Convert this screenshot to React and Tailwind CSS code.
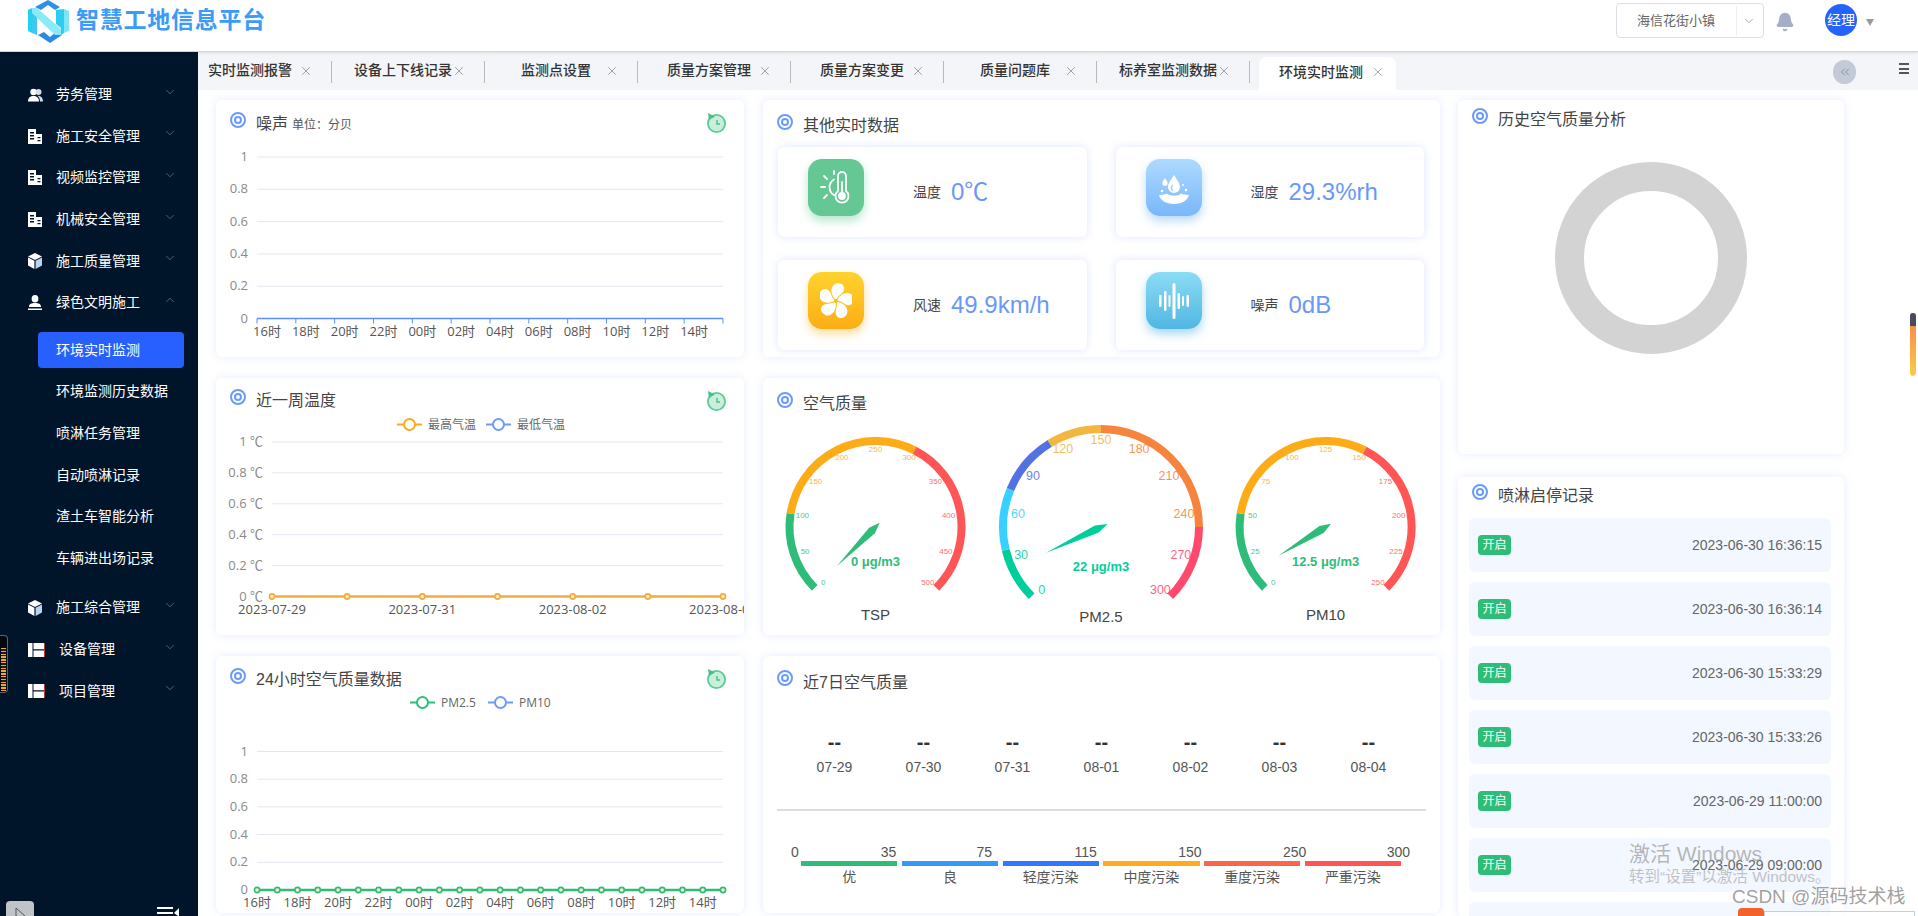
import { ChevronDown, ChevronUp, ChevronsLeft, X, Bell } from "lucide-react";

const tabs = [
  { name: "实时监测报警", first: true },
  { name: "设备上下线记录" },
  { name: "监测点设置" },
  { name: "质量方案管理" },
  { name: "质量方案变更" },
  { name: "质量问题库" },
  { name: "标养室监测数据" },
];

const hours = ["16时", "18时", "20时", "22时", "00时", "02时", "04时", "06时", "08时", "10时", "12时", "14时"];

function TargetIcon({ className = "" }) {
  return (
    <svg width="16" height="16" viewBox="0 0 16 16" className={`shrink-0 ${className}`}>
      <circle cx="8" cy="8" r="7" fill="none" stroke="#6a9bfb" strokeWidth="2" />
      <circle cx="8" cy="8" r="3" fill="none" stroke="#6a9bfb" strokeWidth="2" />
    </svg>
  );
}

function RefreshIcon() {
  return (
    <svg width="21" height="21" viewBox="0 0 21 21" className="absolute right-[17px] top-[12px]">
      <circle cx="10.5" cy="11.5" r="8.6" fill="#c9eedb" stroke="#5fcb95" strokeWidth="1.8" />
      <path d="M2 1 L3 8 L9 4.500 Z" fill="#4cbf87" />
      <path d="M11 8 V12 H14" fill="none" stroke="#4cbf87" strokeWidth="1.4" />
    </svg>
  );
}

function Card({ className = "", children }) {
  return (
    <div className={`relative rounded-md bg-white overflow-hidden shadow-[0_0_10px_rgba(90,130,250,0.16)] ${className}`}>
      {children}
    </div>
  );
}

function CardTitle({ text, iconTop, titleTop, sub }) {
  return (
    <div className="flex items-start pl-[14px]">
      <TargetIcon className={iconTop} />
      <div className={`ml-[10px] text-[16px] leading-6 text-[#444] whitespace-nowrap ${titleTop}`}>
        {text}
        {sub && <span className="ml-1 text-[12px] text-[#555]">{sub}</span>}
      </div>
    </div>
  );
}

// flat line charts, all series are at zero
function LineChart({ top, bottom, left, yLabels, xLabels, band, color, points, dot, legend, labelY, axis }) {
  const right = 507;
  const rows = yLabels.length - 1;
  const xs = Array.from({ length: points }, (_, i) => left + (i * (right - left)) / (points - 1));
  return (
    <svg width="528" height="221" className="block font-['Open_Sans','Noto_Sans_CJK_SC',sans-serif]">
      {legend?.map((l) => (
        <g key={l.text}>
          <line x1={l.x} x2={l.x + 25} y1="10.5" y2="10.5" stroke={l.color} strokeWidth="2" />
          <circle cx={l.x + 12.5} cy="10.5" r="5.5" fill="#fff" stroke={l.color} strokeWidth="2" />
          <text x={l.x + 31} y="14.5" fontSize="12" fill="#666">{l.text}</text>
        </g>
      ))}
      {yLabels.map((t, i) => {
        const y = bottom - (i * (bottom - top)) / rows;
        return (
          <g key={t}>
            {i > 0 && <line x1={left} x2={right} y1={y} y2={y} stroke="#e3e7f1" />}
            <text x={left - 9} y={y + 4} textAnchor="end" fontSize="13" fill="#8a8a8a">{t}</text>
          </g>
        );
      })}
      {axis && (
        <g stroke="#5b8ff9">
          <line x1={left} x2={right} y1={bottom} y2={bottom} strokeWidth="1.5" />
          {Array.from({ length: 13 }, (_, i) => {
            const x = left + (i * (right - left)) / 12;
            return <line key={i} x1={x} x2={x} y1={bottom} y2={bottom + 5} />;
          })}
        </g>
      )}
      {points > 0 && !axis && (
        <>
          <line x1={left} x2={right} y1={bottom} y2={bottom} stroke={color} strokeWidth="2.5" />
          {xs.map((x) => (
            <circle key={x} cx={x} cy={bottom} r={dot} fill="#ffe9c4" stroke={color} strokeWidth="1.6" />
          ))}
        </>
      )}
      {xLabels.map((t, i) => (
        <text key={t} x={left + (axis ? 10 : 0) + i * band} y={labelY} textAnchor="middle" fontSize="13" fill="#555">
          {t}
        </text>
      ))}
    </svg>
  );
}

const polar = (cx, cy, rx, ry, deg) => {
  const a = (deg * Math.PI) / 180;
  return [cx + rx * Math.cos(a), cy - ry * Math.sin(a)];
};

function Gauge({ cx, cy, R, max, step, segs, tip, end, value, valueY, label, labelY, tickRx, tickRy, tickSize, color }) {
  const ang = (f) => 225 - 270 * f;
  const r = R - 4;
  let from = 0;
  const ticks = [];
  for (let v = 0; v <= max; v += step) ticks.push(v);
  const [tx, ty] = tip;
  const [ex, ey] = end;
  const wx = tx + (ex - tx) * 0.82;
  const wy = ty + (ey - ty) * 0.82;
  const len = Math.hypot(ex - tx, ey - ty);
  const nx = (-(ey - ty) / len) * 4;
  const ny = ((ex - tx) / len) * 4;
  return (
    <g>
      {segs.map(([to, c]) => {
        const [x1, y1] = polar(cx, cy, r, r, ang(from / max));
        const [x2, y2] = polar(cx, cy, r, r, ang(to / max));
        const big = ((to - from) / max) * 270 > 180 ? 1 : 0;
        const d = `M${x1} ${y1} A${r} ${r} 0 ${big} 1 ${x2} ${y2}`;
        from = to;
        return <path key={to} d={d} fill="none" stroke={c} strokeWidth="8" />;
      })}
      {ticks.map((v) => {
        const [x, y] = polar(cx, cy, tickRx, tickRy, ang(v / max));
        const seg = segs.find(([to]) => v <= to);
        return (
          <text key={v} x={x} y={y + tickSize * 0.36} textAnchor="middle" fontSize={tickSize} fill={seg[1]} opacity="0.85">
            {v}
          </text>
        );
      })}
      <polygon points={`${tx},${ty} ${wx + nx},${wy + ny} ${ex},${ey} ${wx - nx},${wy - ny}`} fill={color} />
      <text x={cx} y={valueY} textAnchor="middle" fontSize="13" fontWeight="700" fill={color}>{value}</text>
      <text x={cx} y={labelY} textAnchor="middle" fontSize="15" fill="#444">{label}</text>
    </g>
  );
}

function SideIcon({ type }) {
  if (type === "people")
    return (
      <svg width="15" height="14" viewBox="0 0 15 14" fill="#fff">
        <circle cx="5.5" cy="4" r="3.2" />
        <circle cx="10.5" cy="4" r="3" fill="#d5dcec" />
        <path d="M0 13.5c0-4 2.5-5.5 5.5-5.5S11 9.500 11 13.500z" />
        <path d="M9.500 7.800c3 0 5.500 1.700 5.500 5.700h-3c0-2.500-1-4.500-2.500-5.700z" fill="#d5dcec" />
      </svg>
    );
  if (type === "building")
    return (
      <svg width="14" height="15" viewBox="0 0 14 15" fill="#fff">
        <path d="M0 15V0h8v5h6v10z" />
        <path d="M2 3h4v1.500H2zM2 6h4v1.500H2zM2 9h4v1.500H2zM9.500 8h3v1.300h-3zM9.500 11h3v1.300h-3z" fill="#00142a" />
      </svg>
    );
  if (type === "cube")
    return (
      <svg width="14" height="16" viewBox="0 0 14 16">
        <path d="M7 0l7 3.500L7 7 0 3.500z" fill="#fff" />
        <path d="M0 4.500l6.400 3.300V16L0 12.500z" fill="#fff" />
        <path d="M7.600 7.800L14 4.500v8L7.600 16z" fill="#b8d3f0" />
      </svg>
    );
  if (type === "user")
    return (
      <svg width="14" height="15" viewBox="0 0 14 15" fill="#fff">
        <ellipse cx="7" cy="3.800" rx="3.400" ry="3.800" />
        <path d="M1 11.500c0-2.500 2.500-3.500 6-3.500s6 1 6 3.500v.5H1zM0 13.500h14V15H0z" />
      </svg>
    );
  return (
    <svg width="17" height="14" viewBox="0 0 17 14">
      <path d="M0 0h4.500v14H0z" fill="#fff" />
      <path d="M5.500 0H16v6.200H5.500zM5.500 7.500H16V14H5.500z" fill="#fff" />
      <path d="M16 0h1v14h-1z" fill="#b03a3a" />
    </svg>
  );
}

function NavItem({ icon, label, open, extra = "", textClass = "ml-[11px]" }) {
  return (
    <div className={`flex items-center h-[41.6px] pl-[28px] pr-[21px] text-white text-[14px] ${extra}`}>
      <span className="w-[17px] flex justify-start"><SideIcon type={icon} /></span>
      <span className={`flex-1 whitespace-nowrap ${textClass}`}>{label}</span>
      {open ? (
        <ChevronUp size={14} strokeWidth={1} className="text-[#8a97a8] -mt-[6px]" />
      ) : (
        <ChevronDown size={14} strokeWidth={1} className="text-[#8a97a8] -mt-[6px]" />
      )}
    </div>
  );
}

function SubItem({ label, active }) {
  return (
    <div className="flex items-center h-[41.6px] pl-[38px] pr-[14px]">
      <div className={`w-full h-9 flex items-center pl-[18px] rounded text-[14px] text-white whitespace-nowrap ${active ? "bg-[#2860ff]" : ""}`}>
        {label}
      </div>
    </div>
  );
}

function Sidebar() {
  return (
    <aside className="w-[198px] shrink-0 bg-[#00142a] pt-[22px]">
      <NavItem icon="people" label="劳务管理" />
      <NavItem icon="building" label="施工安全管理" />
      <NavItem icon="building" label="视频监控管理" />
      <NavItem icon="building" label="机械安全管理" />
      <NavItem icon="cube" label="施工质量管理" />
      <NavItem icon="user" label="绿色文明施工" open />
      <div className="mt-[6px]">
        <SubItem label="环境实时监测" active />
        <SubItem label="环境监测历史数据" />
        <SubItem label="喷淋任务管理" />
        <SubItem label="自动喷淋记录" />
        <SubItem label="渣土车智能分析" />
        <SubItem label="车辆进出场记录" />
      </div>
      <NavItem icon="cube" label="施工综合管理" extra="mt-[8px]" />
      <NavItem icon="panel" label="设备管理" textClass="ml-[14px]" />
      <NavItem icon="panel" label="项目管理" textClass="ml-[14px]" />
    </aside>
  );
}

function Tab({ name, first }) {
  return (
    <div className={`flex items-center h-[38px] text-[14px] font-medium text-[#333] ${first ? "w-[134px]" : "w-[153px]"}`}>
      <span className={`w-[98px] text-center whitespace-nowrap -mt-[1px] ${first ? "ml-[3px]" : "ml-[22px]"}`}>{name}</span>
      <X size={14} strokeWidth={1} className="ml-0 text-[#666] shrink-0" />
      <span className="ml-auto w-px h-[22px] bg-[#b9b9b9] mt-[2px]" />
    </div>
  );
}

function TabBar() {
  return (
    <div className="relative flex h-[38px] bg-[#f4f5f9] shrink-0">
      {tabs.map((t) => (
        <Tab key={t.name} name={t.name} first={t.first} />
      ))}
      <div className="flex items-center h-[33px] mt-[5px] ml-[9px] w-[137px] bg-white rounded-t-lg text-[14px] font-medium text-[#333]">
        <span className="ml-[20px] whitespace-nowrap -mt-[3px]">环境实时监测</span>
        <X size={14} strokeWidth={1} className="ml-[8px] text-[#666] -mt-[3px]" />
      </div>
      <div className="ml-auto flex items-start">
        <div className="mt-[8px] w-[23px] h-6 rounded-full bg-[#c2cad8] flex items-center justify-center">
          <ChevronsLeft size={14} strokeWidth={1.2} className="text-[#66748c]" />
        </div>
        <div className="mt-[11px] ml-[43px] mr-[9px] w-[10px] flex flex-col gap-[2.500px]">
          <span className="h-[2px] bg-[#555]" />
          <span className="h-[2px] bg-[#555]" />
          <span className="h-[2px] bg-[#555]" />
        </div>
      </div>
    </div>
  );
}

function StatTile({ label, value, tile, icon }) {
  return (
    <div className="flex items-center h-[90px] pl-[30px] rounded-md bg-white shadow-[0_0_8px_rgba(90,130,250,0.2)]">
      <div className={`w-14 h-[57px] -mt-[9px] rounded-[14px] flex items-center justify-center ${tile}`}>{icon}</div>
      <span className="ml-[49px] text-[14px] text-[#444] whitespace-nowrap">{label}</span>
      <span className="ml-[10px] text-[24px] text-[#6a98f8] whitespace-nowrap">{value}</span>
    </div>
  );
}

const thermoIcon = (
  <svg width="32" height="36" viewBox="0 0 32 36" fill="none" stroke="#fff" strokeWidth="1.800" strokeLinecap="round">
    <path d="M18 21V6a4 4 0 0 1 8 0v15a6.500 6.500 0 1 1-8 0z" />
    <circle cx="22" cy="26" r="3" fill="#fff" />
    <path d="M22 23V12" />
    <path d="M14 9.500a9 9 0 0 0 0 15.500" />
    <path d="M1 17h4M4 6l3 3M4 28l3-3M14 1v3" />
  </svg>
);

const dropIcon = (
  <svg width="32" height="34" viewBox="0 0 32 34" fill="#fff">
    <path d="M16 4c3 5 6 8 6 12a6 6 0 0 1-12 0c0-4 3-7 6-12zm-1 9c-1.500 1.500-2.200 2.800-2.200 4 0 1.800 1.200 3 2.800 3-1-1-1.600-2-1.300-3.500.1-1.200.6-2.200.7-3.500z" fillRule="evenodd" />
    <path d="M7 7c1.300 2 2.600 3.500 2.600 5.200a2.600 2.600 0 0 1-5.200 0C4.400 10.500 5.700 9 7 7z" />
    <path d="M1 24c4 0 6-1 8-1.500 3 3 11 3 14 0 2 .5 4 1.500 8 1.500-1 5-7 9-15 9S2 29 1 24z" />
    <circle cx="4" cy="20" r="1.300" /><circle cx="28" cy="19" r="1.300" /><circle cx="25" cy="14" r="1" />
  </svg>
);

const fanIcon = (
  <svg width="32" height="36" viewBox="-16 -18 32 36" fill="#fff">
    {[0, 72, 144, 216, 288].map((a) => (
      <path key={a} transform={`rotate(${a})`} d="M-1 -2C-6 -7 -6 -15 0 -17.500c7-1.500 10 4 7 8.500-2 2.500-5 4-6.500 7z" />
    ))}
    <circle r="1.300" fill="#fdbd1f" />
  </svg>
);

const waveIcon = (
  <svg width="32" height="36" viewBox="0 0 32 36" fill="#fff">
    <rect x="1" y="12" width="2.500" height="12" rx="1.200" />
    <rect x="6" y="8" width="2.500" height="20" rx="1.200" />
    <rect x="10.500" y="12" width="2" height="12" rx="1" />
    <rect x="14.500" y="0" width="3" height="36" rx="1.500" />
    <rect x="19.500" y="10" width="2.500" height="16" rx="1.200" />
    <rect x="24" y="13" width="2" height="10" rx="1" />
    <rect x="28.500" y="12" width="2.500" height="12" rx="1.200" />
  </svg>
);

const dates = ["07-29", "07-30", "07-31", "08-01", "08-02", "08-03", "08-04"];

const levels = [
  { name: "优", max: "35", color: "bg-[#2ebd78]", shift: "mr-[1px]" },
  { name: "良", max: "75", color: "bg-[#3399ff]", shift: "mr-[6px]" },
  { name: "轻度污染", max: "115", color: "bg-[#3377ff]", shift: "mr-[2px]" },
  { name: "中度污染", max: "150", color: "bg-[#ffab1a]", shift: "-mr-[2px]" },
  { name: "重度污染", max: "250", color: "bg-[#f7664d]", shift: "-mr-[6px]" },
  { name: "严重污染", max: "300", color: "bg-[#ff5555]", shift: "-mr-[9px]" },
];

const records = [
  "2023-06-30 16:36:15",
  "2023-06-30 16:36:14",
  "2023-06-30 15:33:29",
  "2023-06-30 15:33:26",
  "2023-06-29 11:00:00",
  "2023-06-29 09:00:00",
  "",
];

function Logo() {
  return (
    <svg width="41" height="44" viewBox="0 0 41 44">
      <path d="M7 7 L20 0 L32 7 L27 10 L20 5 L13 10 Z" fill="#2e8fea" />
      <path d="M10 35 L16 32 L22 37 L28 32 L34 35 L22 43 Z" fill="#2b8ae8" />
      <path d="M0 10 L4 8 V33 L0 31 Z" fill="#1fd2f2" />
      <path d="M4 8 L9 11 V35 L4 33 Z" fill="#3cc9f0" />
      <path d="M4 8 L9 8 L33 29 V35 L27 35 L4 13 Z" fill="#8aeaf8" />
      <path d="M28 10 L36 9 V33 L33 35 V28 L28 24 Z" fill="#2ccdf0" />
      <path d="M36 9 L41 11 V31 L36 33 Z" fill="#7de6f6" />
    </svg>
  );
}

export default function App() {
  return (
    <div className="relative w-[1918px] h-[916px] overflow-hidden bg-white flex flex-col font-['Liberation_Sans','Noto_Sans_CJK_SC',sans-serif]">
      {/* Header */}
      <header className="relative z-10 h-[52px] shrink-0 flex items-start bg-white border-b border-[#d2d4d8] shadow-[0_1px_3px_rgba(0,0,0,0.1)]">
        <div className="ml-[28px]"><Logo /></div>
        <div className="ml-[7px] mt-[6px] text-[23px] leading-7 font-bold tracking-[0.750px] text-[#3a9bf8] whitespace-nowrap">智慧工地信息平台</div>
        <div className="ml-auto flex items-start">
          <div className="mt-[3px] w-[148px] h-[35px] flex items-center rounded border border-[#dcdfe6]">
            <span className="ml-[20px] w-[99px] text-[13px] text-[#666] whitespace-nowrap">海信花街小镇</span>
            <span className="w-px h-[30px] bg-[#eeeeee]" />
            <ChevronDown size={14} strokeWidth={1} className="ml-[5px] text-[#777]" />
          </div>
          <Bell size={20} className="mt-[12px] ml-[11px] text-[#a3aec8] fill-[#a3aec8]" />
          <div className="mt-[4px] ml-[30px] w-8 h-8 rounded-full bg-[#2563ff] text-white text-[14px] flex items-center justify-center">经理</div>
          <span className="mt-[19px] ml-[9px] mr-[44px] w-0 h-0 border-x-[4.500px] border-x-transparent border-t-[7px] border-t-[#999]" />
        </div>
      </header>

      <div className="flex flex-1 min-h-0">
        <Sidebar />
        <main className="flex-1 min-w-0 flex flex-col">
          <TabBar />
          <div className="flex gap-[19px] pl-[18px] pt-[10px]">
            {/* Left column */}
            <div className="w-[528px] flex flex-col gap-[21px]">
              <Card className="h-[257px]">
                <div className="h-[36px]">
                  <CardTitle text="噪声" sub="单位：分贝" iconTop="mt-[12px]" titleTop="mt-[12px]" />
                </div>
                <RefreshIcon />
                <LineChart top={21} bottom={182.5} left={41} axis band={38.83}
                  yLabels={["0", "0.2", "0.4", "0.6", "0.8", "1"]} xLabels={hours} labelY={200} points={13} />
              </Card>
              <Card className="h-[257px]">
                <div className="h-[36px]">
                  <CardTitle text="近一周温度" iconTop="mt-[11px]" titleTop="mt-[11px]" />
                </div>
                <RefreshIcon />
                <LineChart top={28} bottom={182.5} left={56} band={75.17} color="#f0ad3c" points={7} dot={2.6}
                  legend={[{ x: 181, color: "#fba91c", text: "最高气温" }, { x: 270, color: "#6a9bfb", text: "最低气温" }]}
                  yLabels={["0 ℃", "0.2 ℃", "0.4 ℃", "0.6 ℃", "0.8 ℃", "1 ℃"]}
                  xLabels={["2023-07-29", "", "2023-07-31", " ", "2023-08-02", "  ", "2023-08-04"]} labelY={200} />
              </Card>
              <Card className="h-[257px]">
                <div className="h-[36px]">
                  <CardTitle text="24小时空气质量数据" iconTop="mt-[12px]" titleTop="mt-[12px]" />
                </div>
                <RefreshIcon />
                <LineChart top={59.500} bottom={198} left={41} band={40.52} color="#2ebd78" points={24} dot={2.6}
                  legend={[{ x: 194, color: "#2ebd78", text: "PM2.5" }, { x: 272, color: "#6a9bfb", text: "PM10" }]}
                  yLabels={["0", "0.2", "0.4", "0.6", "0.8", "1"]} xLabels={hours} labelY={215} />
              </Card>
            </div>

            {/* Middle column */}
            <div className="w-[677px] flex flex-col gap-[21px]">
              <Card className="h-[257px]">
                <div className="h-[47px]">
                  <CardTitle text="其他实时数据" iconTop="mt-[14px]" titleTop="mt-[14px]" />
                </div>
                <div className="grid grid-cols-2 gap-x-[29px] gap-y-[23px] pl-[15px] pr-[16px]">
                  <StatTile label="温度" value="0℃" icon={thermoIcon} tile="bg-[#64c794] shadow-[0_5px_10px_rgba(100,199,148,0.45)]" />
                  <StatTile label="湿度" value="29.3%rh" icon={dropIcon} tile="bg-gradient-to-b from-[#aedaff] to-[#79b7f9] shadow-[0_5px_10px_rgba(121,183,249,0.5)]" />
                  <StatTile label="风速" value="49.9km/h" icon={fanIcon} tile="bg-gradient-to-b from-[#fed32c] to-[#fcad14] shadow-[0_5px_10px_rgba(252,173,20,0.4)]" />
                  <StatTile label="噪声" value="0dB" icon={waveIcon} tile="bg-gradient-to-b from-[#8bdcf4] to-[#50b6e3] shadow-[0_5px_10px_rgba(80,182,227,0.5)]" />
                </div>
              </Card>
              <Card className="h-[257px]">
                <div className="h-[40px]">
                  <CardTitle text="空气质量" iconTop="mt-[14px]" titleTop="mt-[14px]" />
                </div>
                <svg width="677" height="217" className="block">
                  <Gauge cx={112.500} cy={109} R={90} max={500} step={50} tickRx={74} tickRy={78} tickSize={8}
                    segs={[[100, "#2ebd78"], [300, "#fdab17"], [500, "#ff5555"]]}
                    tip={[74, 148]} end={[116.700, 104.700]} color="#2ebd78"
                    value="0 μg/m3" valueY={148} label="TSP" labelY={202} />
                  <Gauge cx={338} cy={109} R={102} max={300} step={30} tickRx={84} tickRy={88} tickSize={12.500}
                    segs={[[35, "#00cf9c"], [75, "#38d0ff"], [115, "#5272e3"], [150, "#f3b63e"], [250, "#f7843c"], [300, "#ff4a6e"]]}
                    tip={[283, 134.700]} end={[344.700, 106]} color="#00cf9c"
                    value="22 μg/m3" valueY={153} label="PM2.5" labelY={204} />
                  <Gauge cx={562.600} cy={109} R={90} max={250} step={25} tickRx={74} tickRy={78} tickSize={8}
                    segs={[[50, "#2ebd78"], [150, "#fdab17"], [250, "#ff5555"]]}
                    tip={[515.500, 137.700]} end={[568, 105.700]} color="#2ebd78"
                    value="12.5 μg/m3" valueY={148} label="PM10" labelY={202} />
                </svg>
              </Card>
              <Card className="h-[257px]">
                <div className="h-[76px]">
                  <CardTitle text="近7日空气质量" iconTop="mt-[14px]" titleTop="mt-[15px]" />
                </div>
                <div className="grid grid-cols-7 w-[623px] ml-[27px]">
                  {dates.map((d) => (
                    <div key={d} className="flex flex-col items-center">
                      <span className="text-[20px] leading-[20px] font-bold text-[#333]">--</span>
                      <span className="mt-[5px] text-[14px] leading-5 text-[#555]">{d}</span>
                    </div>
                  ))}
                </div>
                <div className="mt-[32px] mx-[14px] h-[2px] bg-[#dddddd]" />
                <div className="mt-[32px] ml-[38px] grid grid-cols-6 gap-x-[4.500px] w-[600px]">
                  {levels.map((l, i) => (
                    <div key={l.name} className="flex flex-col">
                      <div className="flex justify-between h-[18px] text-[14px] leading-[18px] text-[#555]">
                        {i === 0 ? <span className="-ml-[10px]">0</span> : <span />}
                        <span className={l.shift}>{l.max}</span>
                      </div>
                      <div className={`h-[5px] ${l.color}`} />
                      <div className="mt-[1px] text-center text-[14px] leading-5 text-[#555]">{l.name}</div>
                    </div>
                  ))}
                </div>
              </Card>
            </div>

            {/* Right column */}
            <div className="w-[386px] ml-[-1px] flex flex-col gap-[23px]">
              <Card className="h-[354px]">
                <div className="h-[62px]">
                  <CardTitle text="历史空气质量分析" iconTop="mt-[8px]" titleTop="mt-[8px]" />
                </div>
                <div className="mx-auto w-[192px] h-[192px] rounded-full border-[29px] border-[#d3d3d3]" />
              </Card>
              <Card className="h-[440px]">
                <div className="h-[41px]">
                  <CardTitle text="喷淋启停记录" iconTop="mt-[7px]" titleTop="mt-[7px]" />
                </div>
                <div className="flex flex-col gap-[10px] pl-[11px] pr-[13px]">
                  {records.map((r, i) => (
                    <div key={i} className="h-[54px] shrink-0 flex items-center justify-between rounded-md bg-[#f3f7ff] pl-[9px] pr-[9px]">
                      {r && <span className="w-[33px] h-5 rounded bg-[#2ebd77] text-white text-[12px] flex items-center justify-center">开启</span>}
                      {r && <span className="text-[14px] text-[#666]">{r}</span>}
                    </div>
                  ))}
                </div>
              </Card>
            </div>
          </div>
        </main>
      </div>

      {/* Things lying over the page */}
      <div className="absolute left-0 top-[635px] w-[8px] h-[58px] rounded-r border border-l-0 border-[#5a6270] bg-[#05090f] pt-[12px] pl-[1px] pr-[1px]">
        <div className="h-[43px] bg-[repeating-linear-gradient(180deg,#f2a33a_0px,#f2a33a_1.500px,#1a1a1a_1.500px,#1a1a1a_2.800px)]" />
      </div>
      <div className="absolute left-[6px] top-[901px] w-[28px] h-[15px] rounded-t-sm bg-[#c0c4c8]">
        <svg width="28" height="15" viewBox="0 0 28 15" fill="none" stroke="#555"><path d="M10 7v8M10 7l9 8" /></svg>
      </div>
      <div className="absolute left-[157px] top-[906px]">
        <svg width="22" height="10" viewBox="0 0 22 10" fill="#fff">
          <rect x="0" y="1" width="16" height="2" />
          <rect x="0" y="6" width="16" height="2" />
          <path d="M22 2v8h-1l-4-3z" />
        </svg>
      </div>
      <div className="absolute right-[1px] top-[312px] w-[8px] h-[65px] rounded-full border border-white bg-gradient-to-b from-[#f47f4a] to-[#f6cd45] overflow-hidden">
        <div className="h-[13px] bg-[#4a4a62]" />
      </div>
      <div className="absolute left-[1629px] top-[840px] text-[21px] leading-7 text-[#8a8a8a]/60 whitespace-nowrap">激活 Windows</div>
      <div className="absolute left-[1629px] top-[867px] text-[15.500px] leading-5 text-[#8a8a8a]/50 whitespace-nowrap">转到“设置”以激活 Windows。</div>
      <div className="absolute left-[1732px] top-[883px] text-[19px] leading-7 text-[#888]/80 whitespace-nowrap">CSDN @源码技术栈</div>
      <div className="absolute left-[1738px] top-[908px] w-[26px] h-[8px] rounded-t-sm bg-[#f4622c]" />
      <div className="absolute left-[1764px] top-[911px] w-[151px] h-[5px] bg-white/70 border-t border-x border-[#bcd0e8]" />
    </div>
  );
}
